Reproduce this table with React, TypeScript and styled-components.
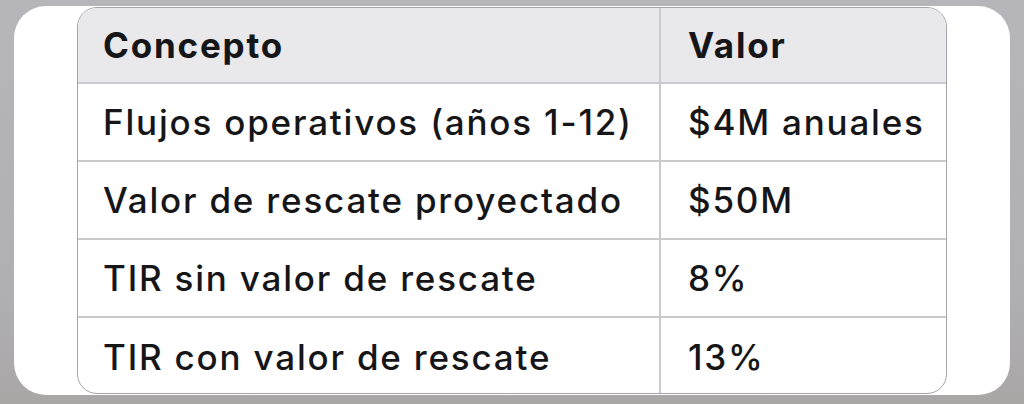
import React from "react";
import styled, { createGlobalStyle } from "styled-components";

const GlobalStyle = createGlobalStyle`
  html, body {
    margin: 0;
    padding: 0;
    height: 100%;
  }
  body {
    background: linear-gradient(180deg, #b6b6ba 0%, #b0b0b4 70%, #a9a6a6 100%);
    font-family: "Inter", "Liberation Sans", sans-serif;
    color: #161618;
  }
`;

const Page = styled.div`
  box-sizing: border-box;
  height: 404px;
  padding: 6px 14px 9px 14px;
  display: flex;
`;

const Card = styled.div`
  flex: 1;
  display: flex;
  background: #ffffff;
  border-radius: 32px;
  padding: 1px 63px 1px 63px;
`;

const TableFrame = styled.div`
  flex: 1;
  border: 1px solid #a4a4a8;
  border-radius: 20px;
  overflow: hidden;
`;

const Table = styled.table`
  width: 100%;
  height: 100%;
  border-collapse: collapse;
  table-layout: fixed;
`;

const HeadRow = styled.tr`
  height: 75px;
  background: #e9e9eb;
`;

const BodyRow = styled.tr`
  height: 78px;
  &:last-child td {
    border-bottom: none;
  }
`;

const Cell = styled.td<{ $first?: boolean; $head?: boolean }>`
  box-sizing: border-box;
  padding: 0 0 0 ${(p) => (p.$first ? 25 : 27)}px;
  text-align: left;
  vertical-align: middle;
  font-size: 35px;
  font-weight: ${(p) => (p.$head ? 700 : 500)};
  letter-spacing: 1.8px;
  white-space: nowrap;
  border-bottom: 2px solid #cacacd;
  border-right: ${(p) => (p.$first ? "2px solid #cacacd" : "none")};
`;

const rows: [string, string][] = [
  ["Flujos operativos (años 1-12)", "$4M anuales"],
  ["Valor de rescate proyectado", "$50M"],
  ["TIR sin valor de rescate", "8%"],
  ["TIR con valor de rescate", "13%"],
];

export default function App() {
  return (
    <>
      <GlobalStyle />
      <Page>
        <Card>
          <TableFrame>
            <Table>
              <colgroup>
                <col style={{ width: "582px" }} />
                <col />
              </colgroup>
              <thead>
                <HeadRow>
                  <Cell as="th" $first $head>
                    Concepto
                  </Cell>
                  <Cell as="th" $head>
                    Valor
                  </Cell>
                </HeadRow>
              </thead>
              <tbody>
                {rows.map(([concept, value]) => (
                  <BodyRow key={concept}>
                    <Cell $first>{concept}</Cell>
                    <Cell>{value}</Cell>
                  </BodyRow>
                ))}
              </tbody>
            </Table>
          </TableFrame>
        </Card>
      </Page>
    </>
  );
}
